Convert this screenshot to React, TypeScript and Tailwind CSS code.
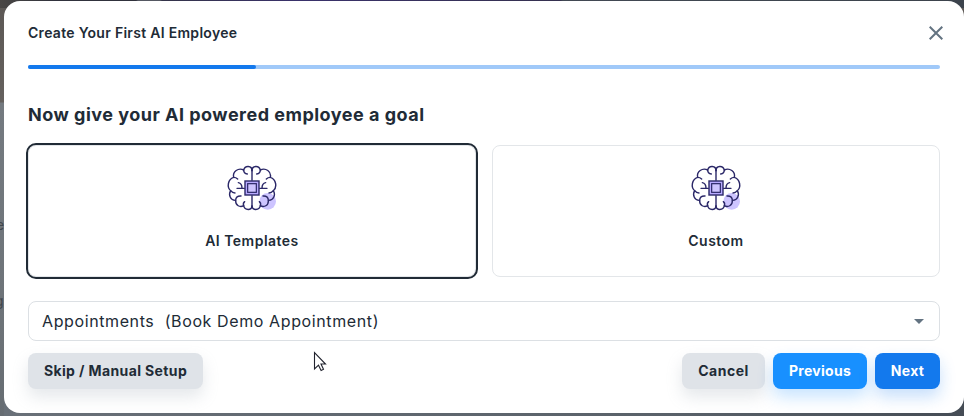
import React from 'react';

function BrainHalf() {
  return (
    <g>
      <path d="M120 44 C120 28 99 27 95 42 C79 34 61 47 65 64 C47 70 44 94 56 104 C48 117 56 134 71 133 C70 149 84 155 95 149 C98 164 120 164 120 150" />
      <path d="M95 42 C95 49 99 53 106 54 M65 64 C70 64 74 66 77 69 M56 104 C60 109 64 111 69 111" />
      <path d="M97 97 H75 M90 97 C90 87 86 81 79 80 M71 133 C71 124 77 119 87 120 M95 149 C93 144 94 140 98 137" />
    </g>
  );
}

function BrainIcon() {
  return (
    <svg viewBox="0 0 240 192" className="h-16 w-20" fill="none" stroke="#2b2868" strokeWidth="4.2" strokeLinecap="round" strokeLinejoin="round">
      <circle cx="167" cy="136" r="25" fill="#cdc4ff" stroke="none" />
      <BrainHalf />
      <g transform="translate(240 0) scale(-1 1)">
        <BrainHalf />
      </g>
      <path d="M120 38 V73 M120 119 V155" />
      <rect x="99" y="75" width="42" height="42" fill="#b8aaff" strokeLinejoin="miter" />
      <rect x="107" y="83" width="26" height="26" fill="#cdc4ff" strokeWidth="3.6" strokeLinejoin="miter" />
    </svg>
  );
}

function GoalCard({ label, selected }: { label: string; selected?: boolean }) {
  return (
    <button
      className={`flex h-[132px] flex-1 flex-col items-center rounded-lg border border-[#e3e6e9] bg-white pt-[10px] ${
        selected ? 'outline-2 outline-[#212b36]' : ''
      }`}
    >
      <BrainIcon />
      <span className="mt-[11px] text-sm leading-5 font-semibold tracking-[0.48px]">{label}</span>
    </button>
  );
}

export default function App() {
  return (
    <div className="relative h-[416px] w-[964px] overflow-hidden bg-[linear-gradient(180deg,#5c5855_0px,#65615e_102px,#747a80_103px,#6d7378_325px,#666c72_416px)] font-['Inter','Open_Sans',sans-serif] text-[#212b36]">
      <div className="absolute inset-x-0 top-0 h-2 bg-[linear-gradient(90deg,#4a4745_0px,#30323c_55px,#30323c_136px,#555862_138px,#555862_160px,#343449_162px,#39316b_300px,#35304f_560px,#424953_563px,#3c434c_964px)]" />
      <div className="absolute right-0 bottom-0 h-8 w-[960px] bg-[linear-gradient(90deg,#697078,#596169_70%,#454c55)]" />
      <span className="absolute top-[215px] left-[-4px] text-sm text-[#41474d]">e</span>
      <span className="absolute top-[291px] left-[-5px] text-sm text-[#41474d]">g</span>
      <main className="relative mt-px ml-1 flex h-[412px] flex-col rounded-2xl bg-white px-6">
        <header className="flex h-16 items-center justify-between">
          <h1 className="text-sm font-semibold tracking-[0.29px]">Create Your First AI Employee</h1>
          <button aria-label="Close" className="-mr-[3px]">
            <svg viewBox="0 0 14 14" className="h-[14px] w-[14px]" fill="none" stroke="#637381" strokeWidth="2">
              <path d="M.7.7l12.6 12.6M13.3.7.7 13.3" />
            </svg>
          </button>
        </header>
        <div className="h-1 shrink-0 overflow-hidden rounded-full bg-[#a0c9f9]">
          <div className="h-full w-1/4 rounded-r-full bg-[#1379ed]" />
        </div>
        <h2 className="mt-8 text-lg leading-7 font-bold tracking-[0.49px]">Now give your AI powered employee a goal</h2>
        <section className="mt-4 flex gap-4">
          <GoalCard label="AI Templates" selected />
          <GoalCard label="Custom" />
        </section>
        <div className="mt-6 flex h-10 shrink-0 items-center justify-between rounded-lg border border-[#dce0e4] pr-[15px] pl-[13px]">
          <span className="text-base tracking-[0.61px] whitespace-pre">Appointments  (Book Demo Appointment)</span>
          <svg viewBox="0 0 10 5" className="h-[5px] w-[10px]" fill="#637381">
            <path d="M0 0h10L5 5z" />
          </svg>
        </div>
        <footer className="mt-3 flex h-9 gap-2 text-sm font-bold">
          <button className="mr-auto w-[175px] rounded-lg bg-[#dfe3e8] tracking-[0.38px] shadow-[0_8px_16px_rgba(145,158,171,0.24)]">Skip / Manual Setup</button>
          <button className="w-[83px] rounded-lg bg-[#dfe3e8] tracking-[0.5px] shadow-[0_8px_16px_rgba(145,158,171,0.24)]">Cancel</button>
          <button className="w-[94px] rounded-lg bg-[#1890ff] tracking-[0.3px] text-white shadow-[0_8px_16px_rgba(24,144,255,0.24)]">Previous</button>
          <button className="w-[65px] rounded-lg bg-[#1379ed] tracking-[0.3px] text-white shadow-[0_8px_16px_rgba(19,121,237,0.24)]">Next</button>
        </footer>
      </main>
      <svg viewBox="0 0 14 21" className="absolute top-[351px] left-[313px] h-[21px] w-[14px]" fill="white" stroke="#20222d" strokeWidth="1.1">
        <path d="M1.5 1.5V18l4-3.8 2.6 5.2 2.4-1.2L8 13h4.5z" />
      </svg>
    </div>
  );
}
